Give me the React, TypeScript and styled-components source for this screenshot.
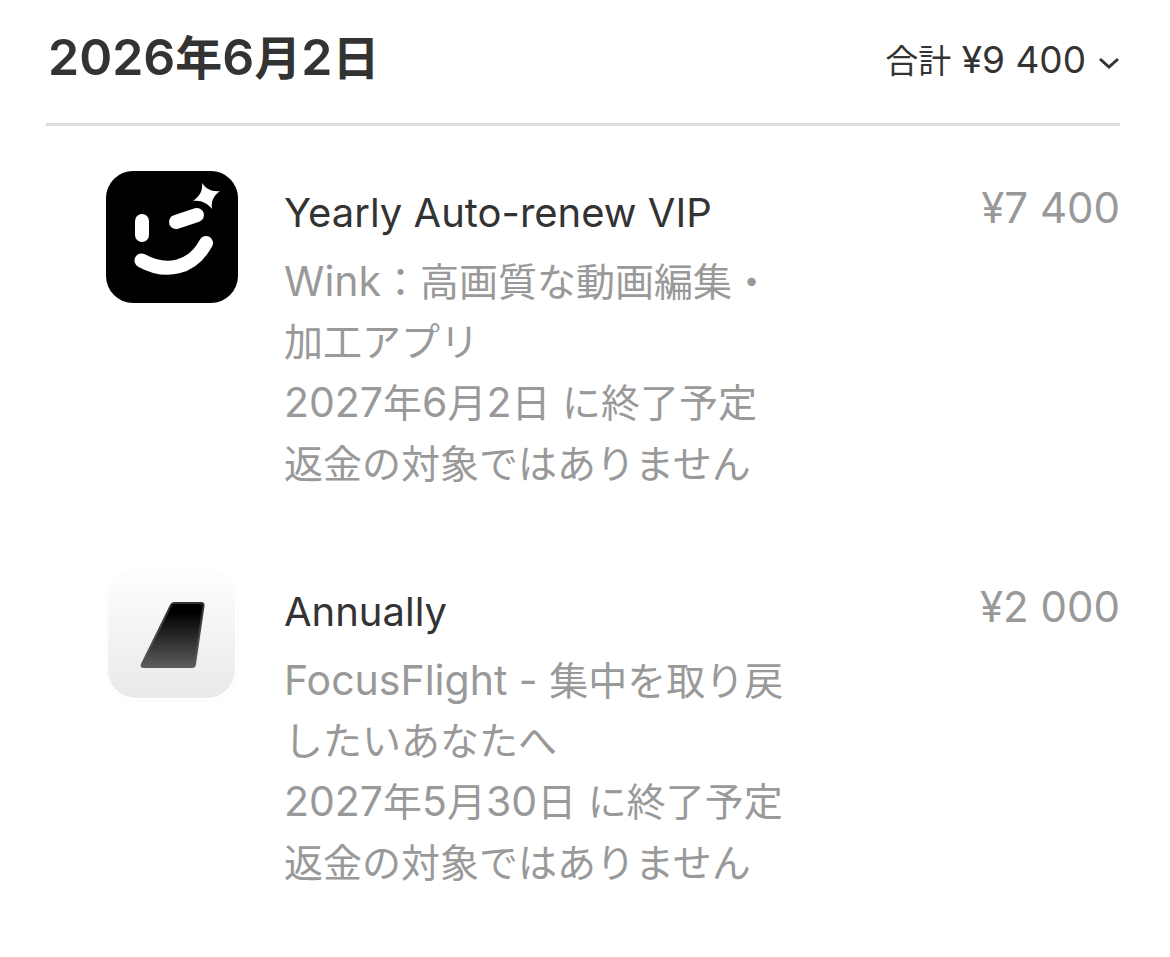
import React, { Fragment } from 'react';
import styled, { createGlobalStyle } from 'styled-components';

const GlobalStyle = createGlobalStyle`
  * { box-sizing: border-box; }
  body {
    margin: 0;
    background: #fff;
    color: #333;
    font-family: Inter, "Noto Sans CJK JP", sans-serif;
  }
`;

const Page = styled.main`
  padding: 0 50px 48px 46px;
`;

const Header = styled.header`
  display: flex;
  align-items: center;
  justify-content: space-between;
  height: 126px;
  padding: 0 0 8px 2px;
  border-bottom: 3px solid #dcdcdc;
`;

const PurchaseDate = styled.h1`
  margin: 0;
  font-size: 47px;
  line-height: 60px;
  font-weight: 600;
`;

const TotalButton = styled.button`
  display: flex;
  align-items: center;
  gap: 12px;
  padding: 6px 0 0;
  border: 0;
  background: none;
  color: inherit;
  font: inherit;
  font-size: 33px;
  line-height: 48px;
  white-space: nowrap;
  cursor: pointer;
`;

/* Latin letters and digits run larger than the kana and kanji beside them. */
const Latin = styled.span<{ $size: number }>`
  font-size: ${(p) => p.$size}px;
  line-height: 1;
`;

const Chevron = styled.svg`
  display: block;
  margin-top: 4px;
`;

const PurchaseList = styled.ul`
  display: flex;
  flex-direction: column;
  gap: 76px;
  margin: 0;
  padding: 45px 0 0 60px;
  list-style: none;
`;

const Purchase = styled.li`
  display: grid;
  grid-template-columns: 132px minmax(0, 504px) 1fr;
  column-gap: 46px;
  align-items: start;
`;

const AppIcon = styled.svg`
  display: block;
  width: 132px;
  height: 132px;
`;

const Details = styled.div`
  display: flex;
  flex-direction: column;
  gap: 1px;
  padding-top: 12px;
  color: #999;
  font-size: 39px;
  line-height: 60px;
`;

const PlanName = styled.h2`
  margin: 0 0 8px;
  color: #333;
  font-size: 40px;
  font-weight: 400;
  line-height: 60px;
`;

const Line = styled.p`
  margin: 0;
`;

const Price = styled.span`
  padding-top: 12px;
  color: #999;
  font-size: 42px;
  line-height: 50px;
  text-align: right;
  white-space: nowrap;
`;

const Mixed = ({ text, size }: { text: string; size: number }) => (
  <>
    {text
      .split(/([\u0020-\u00ff]+)/)
      .filter(Boolean)
      .map((part, i) =>
        /^[\u0020-\u00ff]/.test(part) ? (
          <Latin key={i} $size={size}>
            {part}
          </Latin>
        ) : (
          part
        ),
      )}
  </>
);

const WinkIcon = () => (
  <AppIcon viewBox="0 0 132 132" aria-hidden="true">
    <rect width="132" height="132" rx="27" fill="#000" />
    <g fill="none" stroke="#fff" strokeWidth="14" strokeLinecap="round">
      <path d="M36 50V64" />
      <path d="M70 51L91 44" />
      <path d="M35.500 89.500C60 103 86 98 100 72" />
    </g>
    <path
      d="M96 12C100 18 106 21 114 20C107 25 105 31 106 38C101 32 95 29 87 30C94 25 97 19 96 12Z"
      fill="#fff"
    />
  </AppIcon>
);

const FocusFlightIcon = () => (
  <AppIcon viewBox="0 0 132 132" aria-hidden="true">
    <defs>
      <linearGradient id="tile" x1="0" y1="0" x2="0" y2="1">
        <stop offset="0" stopColor="#fefefe" />
        <stop offset="1" stopColor="#e9e9e9" />
      </linearGradient>
      <linearGradient id="runway" x1="0" y1="0" x2="0" y2="1">
        <stop offset="0.150" stopColor="#000" />
        <stop offset="1" stopColor="#5c5c5c" />
      </linearGradient>
      <linearGradient id="runwayEdge" x1="0" y1="0" x2="0" y2="1">
        <stop offset="0" stopColor="#333" />
        <stop offset="1" stopColor="#5a5a5a" />
      </linearGradient>
    </defs>
    <rect x="0.500" y="0.500" width="131" height="131" rx="30" fill="#fff" stroke="#fafafa" />
    <rect x="2" y="1" width="127" height="127" rx="28" fill="url(#tile)" />
    <path
      d="M68 33H95Q98 33 97.500 36L89 94Q88.500 97 86 97H38Q34.500 97 36 94L65 35Q66 33 68 33Z"
      fill="url(#runway)"
      stroke="url(#runwayEdge)"
      strokeWidth="2"
    />
  </AppIcon>
);

const purchases = [
  {
    icon: <WinkIcon />,
    plan: 'Yearly Auto-renew VIP',
    app: ['Wink：高画質な動画編集・', '加工アプリ'],
    ends: '2027年6月2日 に終了予定',
    price: '¥7 400',
  },
  {
    icon: <FocusFlightIcon />,
    plan: 'Annually',
    app: ['FocusFlight - 集中を取り戻', 'したいあなたへ'],
    ends: '2027年5月30日 に終了予定',
    price: '¥2 000',
  },
];

export default function App() {
  return (
    <Page lang="ja">
      <GlobalStyle />
      <Header>
        <PurchaseDate>
          <Mixed text="2026年6月2日" size={50} />
        </PurchaseDate>
        <TotalButton type="button" aria-expanded="true">
          <span>
            <Mixed text="合計 ¥9 400" size={37} />
          </span>
          <Chevron width="22" height="14" viewBox="0 0 22 14" aria-hidden="true">
            <path d="M2 3L11 11L20 3" fill="none" stroke="#333" strokeWidth="3" />
          </Chevron>
        </TotalButton>
      </Header>
      <PurchaseList>
        {purchases.map((item) => (
          <Purchase key={item.plan}>
            {item.icon}
            <Details>
              <PlanName>{item.plan}</PlanName>
              <Line>
                {item.app.map((phrase, i) => (
                  <Fragment key={phrase}>
                    {i > 0 && <wbr />}
                    <Mixed text={phrase} size={41} />
                  </Fragment>
                ))}
              </Line>
              <Line>
                <Mixed text={item.ends} size={41} />
              </Line>
              <Line>返金の対象ではありません</Line>
            </Details>
            <Price>{item.price}</Price>
          </Purchase>
        ))}
      </PurchaseList>
    </Page>
  );
}
